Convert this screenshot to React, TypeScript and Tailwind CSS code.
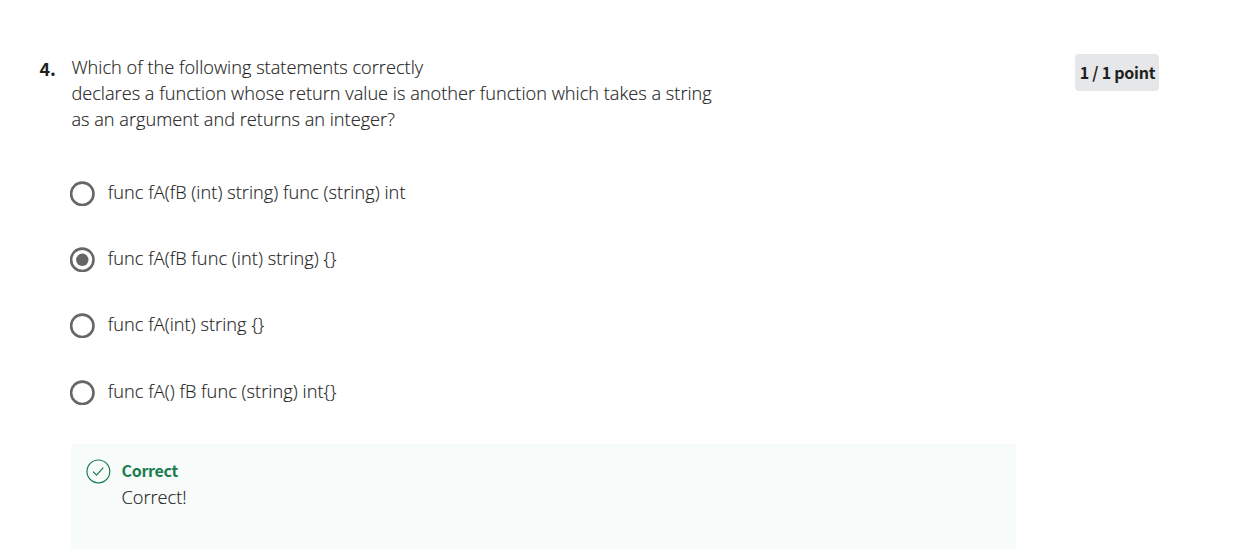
const options = [
  { label: "func fA(fB (int) string) func (string) int", selected: false },
  { label: "func fA(fB func (int) string) {}", selected: true },
  { label: "func fA(int) string {}", selected: false },
  { label: "func fA() fB func (string) int{}", selected: false },
];

function Radio({ selected }: { selected: boolean }) {
  return (
    <svg className="size-[25px] shrink-0" viewBox="0 0 25 25" fill="none">
      <circle cx="12.3" cy="12.8" r="11.2" stroke="#666" strokeWidth="2.6" />
      {selected && <circle cx="12.3" cy="12.8" r="6.2" fill="#666" />}
    </svg>
  );
}

export default function App() {
  return (
    <main className="flex h-[554px] w-full items-start overflow-hidden bg-white pt-[54px] pl-[39px] font-['Open_Sans',sans-serif] text-[18.2px] leading-[26px] font-light text-[#1f1f1f] [-webkit-text-stroke:0.15px]">
      <div className="w-8 shrink-0 pt-px pl-[0.5px] font-['Noto_Sans_CJK_SC',sans-serif] text-[18px] font-bold [-webkit-text-stroke:0]">4.</div>
      <section className="w-[945px] shrink-0">
        <h1 className="pl-[0.4px]">
          Which of the following statements correctly
          <br />
          declares a function whose return value is another function which takes a string
          <br />
          as an argument and returns an integer?
        </h1>
        <div className="mt-[49px] -ml-px flex flex-col gap-[41.3px]">
          {options.map((o, i) => (
            <label key={o.label} className={i === 2 ? "-mt-[0.4px] flex h-[25px] items-center gap-[12.7px]" : "flex h-[25px] items-center gap-[12.7px]"}>
              <Radio selected={o.selected} />
              <span className="-mt-[3px] tracking-[0.04px]">{o.label}</span>
            </label>
          ))}
        </div>
        <div className="mt-[39.5px] flex h-[106px] gap-[10.5px] bg-[#f7fbf9] pt-[14px] pl-[15px]">
          <svg className="mt-[1px] size-[25px]" viewBox="0 0 25 25" fill="none" stroke="#1d7c50" strokeWidth="1.2">
            <circle cx="12.4" cy="12.4" r="11.4" />
            <path d="M7 12.7l3.5 3.5 6.8-7.5" />
          </svg>
          <div>
            <div className="-mt-px mb-px font-['Noto_Sans_CJK_SC',sans-serif] text-[16px] font-bold tracking-[-0.3px] text-[#1d7c50] [-webkit-text-stroke:0]">Correct</div>
            <div>Correct!</div>
          </div>
        </div>
      </section>
      <div className="ml-[59px] flex h-[37px] w-[84px] items-center justify-center rounded bg-[#e5e7e8] pb-px pl-px font-['Noto_Sans_CJK_SC',sans-serif] text-[16px] font-bold tracking-[-0.25px] whitespace-nowrap [-webkit-text-stroke:0]">1 / 1 point</div>
    </main>
  );
}
